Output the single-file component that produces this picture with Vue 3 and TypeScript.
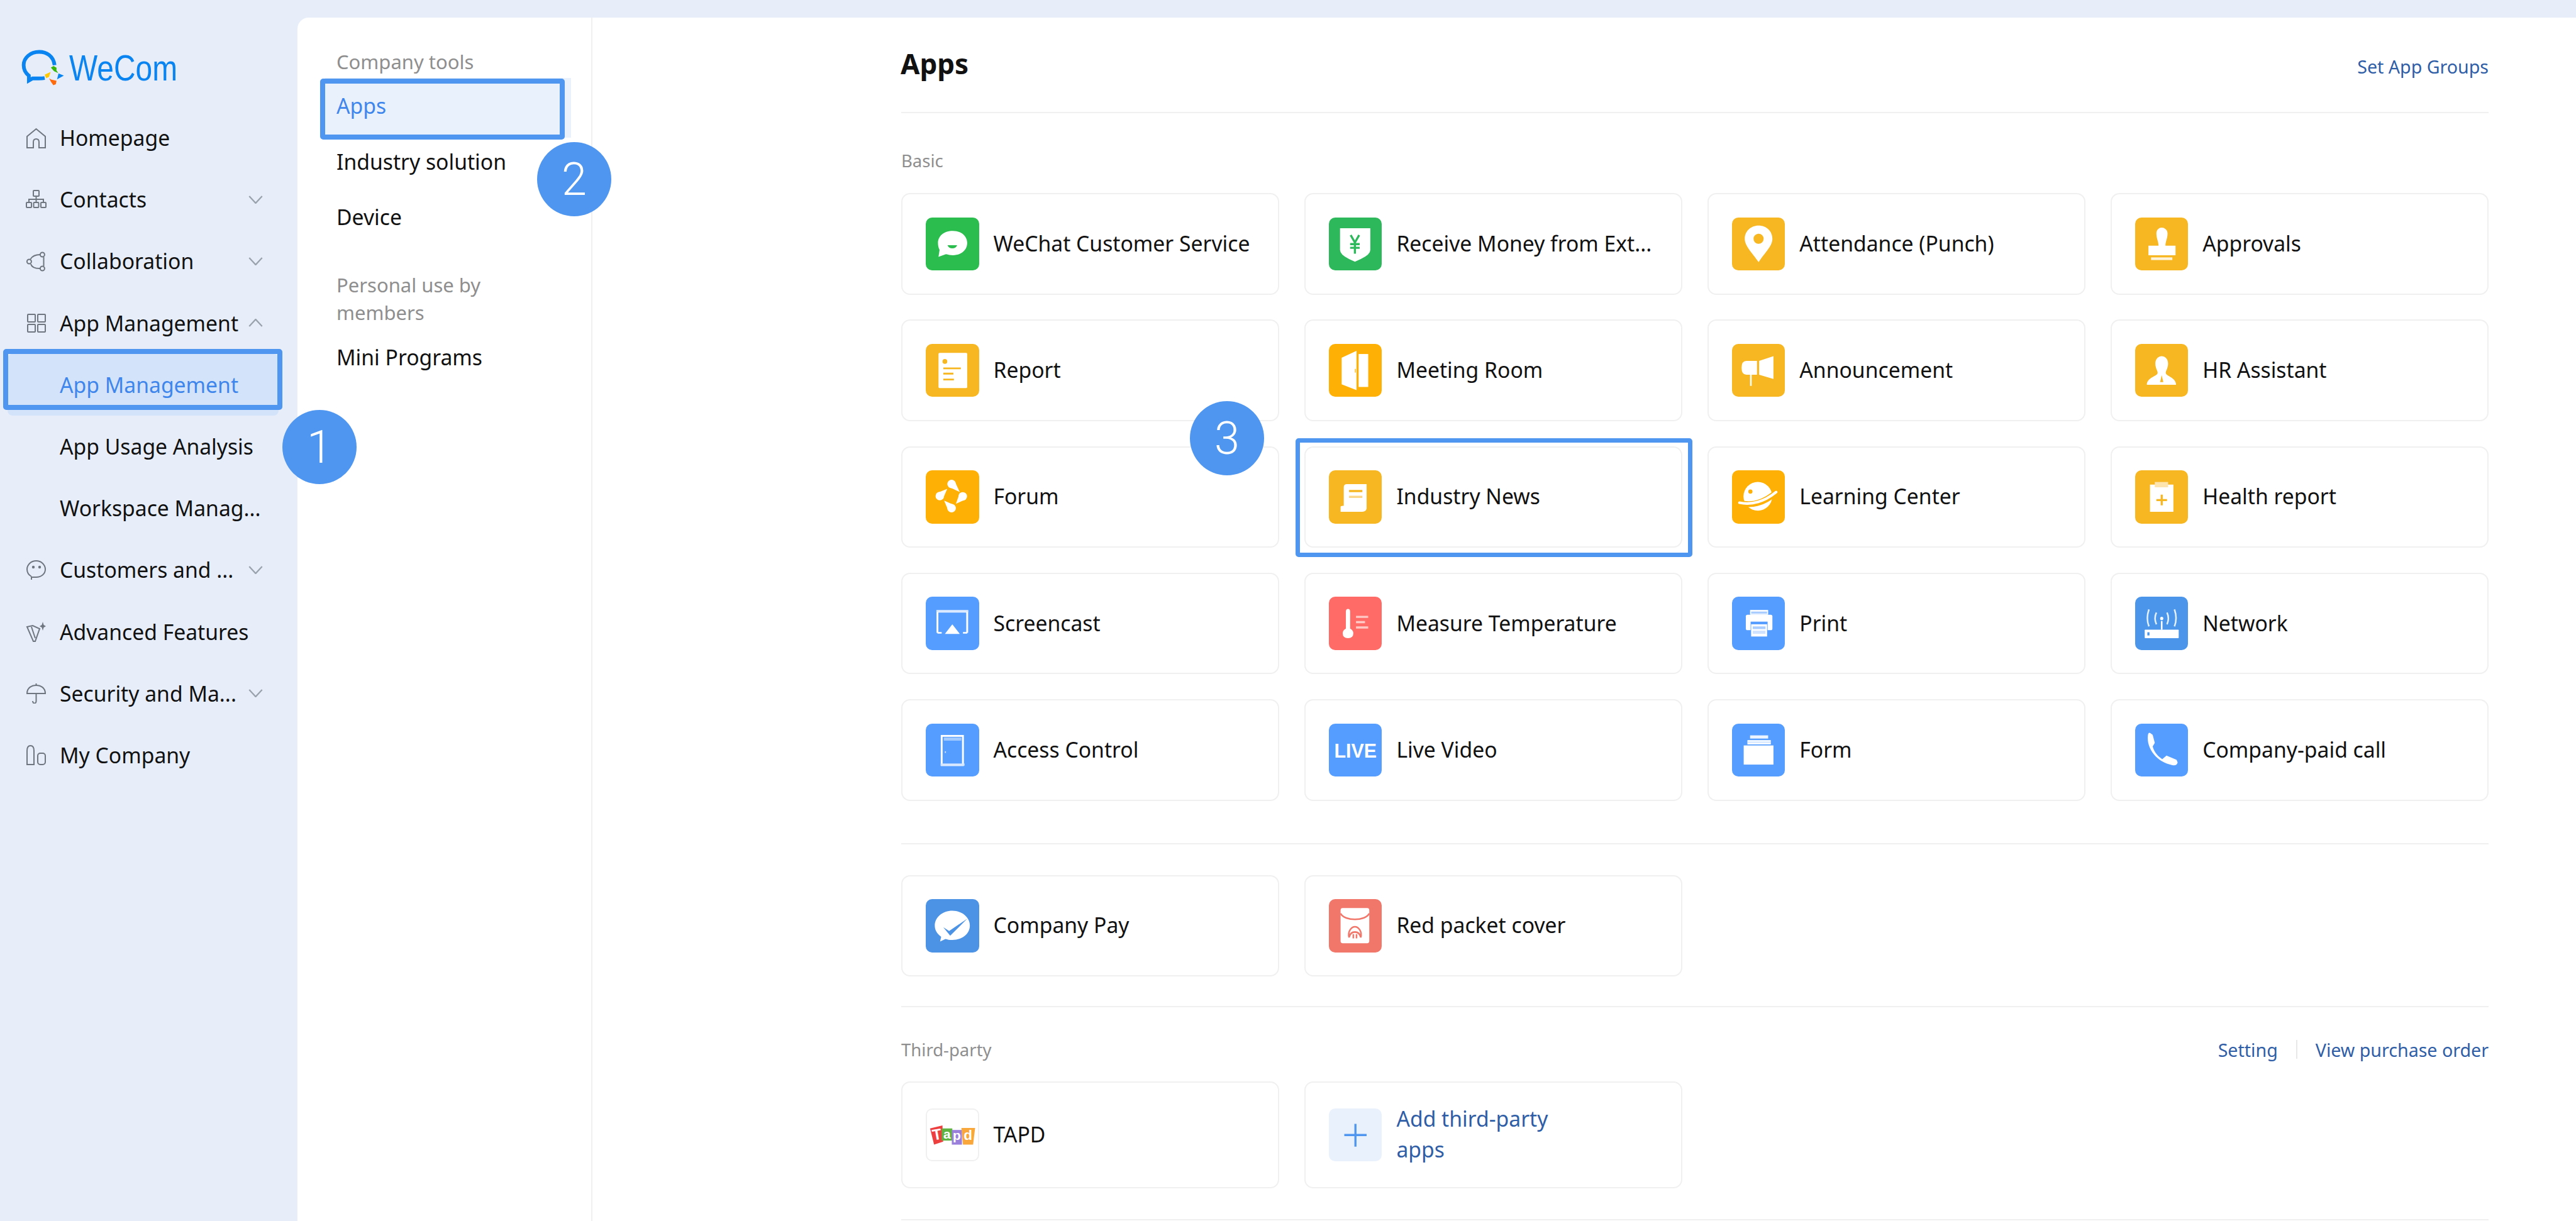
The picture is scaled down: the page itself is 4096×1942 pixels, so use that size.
<script setup lang="ts">
interface NavItem {
  label: string
  icon?: string
  arrow?: "up" | "down"
  active?: boolean
}

interface AppItem {
  name: string
  color: string
  glyph: string
}

const navItems: NavItem[] = [
  { label: "Homepage", icon: `<path d="M2 14 16.5 2 31 14V32H21V23Q21 18 16.5 18T12 23V32H2Z"/>` },
  {
    label: "Contacts",
    arrow: "down",
    icon: `<rect x="12" y="2" width="9" height="9" rx="1"/><path d="M5 21V16H28V21M16.500 11V21"/><rect x="1" y="21" width="8" height="8" rx="1"/><rect x="12.500" y="21" width="8" height="8" rx="1"/><rect x="24" y="21" width="8" height="8" rx="1"/>`,
  },
  {
    label: "Collaboration",
    arrow: "down",
    icon: `<path d="M7.500 13Q12 6 22.500 6M8 21Q10 28 22 28M28.500 10V24"/><circle cx="26.400" cy="6" r="3.500"/><circle cx="5.400" cy="17" r="3.500"/><circle cx="26.400" cy="28" r="3.500"/>`,
  },
  {
    label: "App Management",
    arrow: "up",
    icon: `<rect x="3" y="3" width="12" height="12" rx="1"/><rect x="19" y="3" width="12" height="12" rx="1"/><rect x="3" y="19" width="12" height="12" rx="1"/><rect x="19" y="19" width="12" height="12" rx="1"/>`,
  },
  { label: "App Management", active: true },
  { label: "App Usage Analysis" },
  { label: "Workspace Manag..." },
  {
    label: "Customers and ...",
    arrow: "down",
    icon: `<path d="M9 27C4 24 2 20 2 15.500 2 8 8.500 2 16.500 2S31 8 31 15.500 24.500 28 16.500 28H9V32"/><circle cx="12" cy="12" r="1.200" fill="#6f7680"/><circle cx="22" cy="12" r="1.200" fill="#6f7680"/>`,
  },
  {
    label: "Advanced Features",
    icon: `<path d="M2 9 11 7 22 12 15 32H12Z"/><path d="M9 9 15 27"/><path d="M27 1 28.500 6 32 8 28.500 10 27 15 25.500 10 22 8 25.500 6Z" fill="#6f7680" stroke="none"/>`,
  },
  {
    label: "Security and Ma...",
    arrow: "down",
    icon: `<path d="M2 17C2 8 9 4 16.500 4S31 8 31 17Z"/><path d="M16.500 1V4M16.500 17V29Q16.500 33 13 32.500 11 32 11 29"/>`,
  },
  {
    label: "My Company",
    icon: `<path d="M2 32V10Q2 2 7.500 2T13 10V32Z"/><rect x="19" y="14" width="12" height="18" rx="4"/>`,
  },
]

const amber = "#f6b722"
const gold = "#feb104"
const blue = "#559dfe"

const basicApps: AppItem[] = [
  {
    name: "WeChat Customer Service",
    color: "#2bbd4e",
    glyph: `<path d="M24 74 26 61C24 57 23 53 23 48 23 34 35 25 51 25S78 35 78 48 67 71 51 71C47 71 42 70 38 69Z" fill="#fff"/><path d="M41 52H59Q57 58 50 58T41 52Z" fill="#2bbd4e"/>`,
  },
  {
    name: "Receive Money from Ext...",
    color: "#2eb85c",
    glyph: `<path d="M21 20H78V61Q78 70 60 78L49 83 38 78Q21 70 21 61Z" fill="#fff"/><path d="M41 33 49 47 57 33M40 50H58M40 57H58M49 47V68" fill="none" stroke="#2eb85c" stroke-width="4"/>`,
  },
  {
    name: "Attendance (Punch)",
    color: amber,
    glyph: `<path d="M50 84C38 66 24 54 24 40 24 25 36 15 50 15S76 25 76 40C76 54 62 66 50 84Z" fill="#fff"/><circle cx="50" cy="40" r="9.500" fill="${amber}"/>`,
  },
  {
    name: "Approvals",
    color: amber,
    glyph: `<path d="M40 30C40 23 45 19 50 19S61 23 61 30C61 40 57 45 57 53H76V71H25V53H44C44 45 40 40 40 30Z" fill="#fff"/><rect x="30" y="75" width="40" height="5" fill="#fff" opacity=".85"/>`,
  },
  {
    name: "Report",
    color: amber,
    glyph: `<rect x="24" y="17" width="54" height="66" rx="2" fill="#fff"/><circle cx="36" cy="33" r="4.500" fill="${amber}"/><path d="M33 46H66M33 56H52M33 67H53" stroke="${amber}" stroke-width="3.500"/>`,
  },
  {
    name: "Meeting Room",
    color: gold,
    glyph: `<path d="M24 26 52 13V87L24 76Z" fill="#fff"/><rect x="56" y="19" width="18" height="62" fill="#fff"/><rect x="49" y="47" width="1.500" height="7" fill="${gold}"/>`,
  },
  {
    name: "Announcement",
    color: amber,
    glyph: `<path d="M47 32V58H37V79H34V58H27Q18 58 18 45T27 32ZM51 32 78 23V66L51 58Z" fill="#fff"/>`,
  },
  {
    name: "HR Assistant",
    color: amber,
    glyph: `<path d="M38 37C38 28 44 23 50 23S62 28 62 37C62 47 56 52 58 56 60 61 77 64 77 77H22C22 64 40 61 42 56 44 52 38 47 38 37Z" fill="#fff"/><path d="M50 59 53 72H47Z" fill="${amber}"/>`,
  },
  {
    name: "Forum",
    color: gold,
    glyph: `<g fill="#fff"><circle cx="48.600" cy="25.700" r="8"/><path d="M54.300 20 64 41 43 31Z"/><circle cx="69.600" cy="49" r="8"/><path d="M75.500 54.400 56.800 63 63.700 43.600Z"/><circle cx="48.600" cy="71.300" r="8"/><path d="M54.300 65.700 42.900 76.900 34.600 57Z"/><circle cx="26.400" cy="48.600" r="8"/><path d="M32 54.400 20.800 42.800 40.400 35Z"/></g>`,
  },
  {
    name: "Industry News",
    color: amber,
    glyph: `<path d="M34 26H71V72Q70 78 63 78H22V69Q22 67 26 67H28V32Q28 26 34 26Z" fill="#fff"/><path d="M38 39H63" stroke="${amber}" stroke-width="4"/><path d="M38 50H63" stroke="#fbd78a" stroke-width="4"/>`,
  },
  {
    name: "Learning Center",
    color: gold,
    glyph: `<circle cx="48.600" cy="49" r="27" fill="#fff"/><circle cx="34.600" cy="40" r="4" fill="${gold}"/><path d="M12 61Q50 72 85 40" fill="none" stroke="${gold}" stroke-width="11"/><path d="M14 61Q50 68 83 41" fill="none" stroke="#fff" stroke-width="5" stroke-linecap="round"/>`,
  },
  {
    name: "Health report",
    color: amber,
    glyph: `<path d="M28 27H72V78H28Z" fill="#fff"/><rect x="37" y="22" width="25" height="10" fill="#fde3ad"/><path d="M50 46V66M40 56H60" stroke="${amber}" stroke-width="4"/>`,
  },
  {
    name: "Screencast",
    color: blue,
    glyph: `<path d="M22 68V28H78V68" fill="none" stroke="#fff" stroke-width="3.500"/><rect x="20" y="25" width="60" height="4" fill="#d7e7ff"/><path d="M22 68H30M70 68H78" stroke="#fff" stroke-width="3"/><path d="M50 52 64 70H36Z" fill="#fff"/>`,
  },
  {
    name: "Measure Temperature",
    color: "#ff6b66",
    glyph: `<path d="M32 28Q32 23 36 23T40 28V60Q46 63 46 69 46 78 36 78T26 69Q26 63 32 60Z" fill="#fff"/><path d="M51 38H74M51 48H68M51 58H74" stroke="#ffc9c6" stroke-width="4"/>`,
  },
  {
    name: "Print",
    color: blue,
    glyph: `<rect x="34" y="25" width="34" height="9" fill="#fff"/><rect x="36" y="28" width="30" height="4" fill="#a9cdff"/><rect x="26" y="34" width="50" height="29" rx="3" fill="#fff"/><rect x="35" y="47" width="32" height="17" fill="${blue}"/><rect x="36" y="52" width="30" height="23" fill="#fff"/><rect x="39" y="56" width="24" height="5" fill="#a9cdff"/><rect x="39" y="64" width="24" height="6" fill="#cfe2ff"/>`,
  },
  {
    name: "Network",
    color: "#4b96ea",
    glyph: `<rect x="18" y="62" width="64" height="16" rx="1" fill="#fff"/><rect x="23" y="67" width="4" height="6" fill="#4b96ea"/><path d="M50 46V62" stroke="#fff" stroke-width="3"/><circle cx="50" cy="41" r="3" fill="#fff"/><path d="M40 30Q35 41 40 52M60 30Q65 41 60 52M26 24Q20 41 26 56M74 24Q80 41 74 56" fill="none" stroke="#e5f0ff" stroke-width="3"/>`,
  },
  {
    name: "Access Control",
    color: blue,
    glyph: `<rect x="30" y="23" width="40" height="55" fill="none" stroke="#fff" stroke-width="3.500"/><rect x="34" y="26" width="33" height="6" fill="#d7e7ff" opacity=".6"/><rect x="28" y="75" width="45" height="4" fill="#d7e7ff"/><rect x="36" y="52" width="2" height="3" fill="#d7e7ff"/>`,
  },
  {
    name: "Live Video",
    color: blue,
    glyph: `<text x="50" y="64" text-anchor="middle" font-family="'Liberation Sans', Arial, sans-serif" font-weight="700" font-size="38" textLength="80" lengthAdjust="spacingAndGlyphs" fill="#fff">LIVE</text>`,
  },
  {
    name: "Form",
    color: blue,
    glyph: `<rect x="34" y="22" width="34" height="6" fill="#fff" opacity=".9"/><rect x="29" y="31" width="44" height="8" fill="#fff"/><rect x="29" y="34" width="44" height="1.500" fill="#bcd8ff"/><rect x="22" y="41" width="56" height="36" fill="#fff"/>`,
  },
  {
    name: "Company-paid call",
    color: blue,
    glyph: `<path d="M24 22Q25 15 29 18L33 21 37 36 33 43C36 55 44 62 51 67L59 60 78 68 80 73Q78 80 70 78C42 73 21 48 24 22Z" fill="#fff"/>`,
  },
]

const payApps: AppItem[] = [
  {
    name: "Company Pay",
    color: "#4c93e5",
    glyph: `<path d="M27 80 29 71C21 65 17 58 17 50 17 34 32 22 50 22S83 34 83 50 68 77 50 77C44 77 41 76 37 75Z" fill="#fff"/><path d="M33 53 44 60 78 37 46 69Z" fill="#4c93e5"/>`,
  },
  {
    name: "Red packet cover",
    color: "#f1776b",
    glyph: `<rect x="22" y="17" width="54" height="66" rx="4" fill="#fff"/><path d="M22 27C30 42 68 42 76 27" fill="none" stroke="#f1776b" stroke-width="3"/><path d="M38 72C35 60 43 52 49 52S63 60 60 72C58 64 54 62 49 62S40 64 38 72ZM46 66V74M52 66V74" fill="none" stroke="#f1776b" stroke-width="3"/>`,
  },
]
</script>

<template>
  <div class="page">
    <aside class="sidebar">
      <div class="logo">
        <svg class="logo__mark" viewBox="172 100 345 290" fill="none">
          <path d="M440 225C430 150 375 118 315 118 245 118 190 165 190 225 190 262 205 290 232 310V350L262 332C290 332 330 335 360 330" stroke="#0a84f0" stroke-width="30" />
          <path d="M410 245 432 232 456 246 455 268 470 290 436 274Z" fill="#38b50c" />
          <path d="M360 302 408 280 395 320 372 332Z" fill="#ffc800" />
          <path d="M396 332 412 342 456 352 450 380 430 388 410 360Z" fill="#ff6a0c" />
          <path d="M460 340 472 292 515 310Z" fill="#0a84f0" />
        </svg>
        <span class="logo__text">WeCom</span>
      </div>
      <ul class="nav">
        <li v-for="(item, i) in navItems" :key="i" class="nav__row" :class="{ 'nav__row--active': item.active }">
          <svg v-if="item.icon" class="nav__icon" viewBox="0 0 33 33" v-html="item.icon"></svg>
          <span v-else class="nav__icon"></span>
          <span class="nav__label">{{ item.label }}</span>
          <svg v-if="item.arrow" class="nav__arrow" :class="{ 'nav__arrow--up': item.arrow === 'up' }" viewBox="0 0 24 14">
            <path d="M1 1 12 13 23 1" />
          </svg>
        </li>
      </ul>
    </aside>

    <div class="panel">
      <nav class="subnav">
        <p class="subnav__title subnav__title--first">Company tools</p>
        <a class="subnav__link subnav__link--active">Apps</a>
        <a class="subnav__link">Industry solution</a>
        <a class="subnav__link">Device</a>
        <p class="subnav__title subnav__title--second">Personal use by members</p>
        <a class="subnav__link subnav__link--last">Mini Programs</a>
      </nav>

      <main class="content">
        <header class="head">
          <h1>Apps</h1>
          <a class="link">Set App Groups</a>
        </header>

        <section class="group group--basic">
          <div class="group__label group__label--basic">Basic</div>
          <div class="grid">
            <div v-for="app in basicApps" :key="app.name" class="card">
              <svg class="tile" viewBox="0 0 100 100" :style="{ background: app.color }" v-html="app.glyph"></svg>
              <span class="card__name">{{ app.name }}</span>
            </div>
          </div>
        </section>

        <section class="group group--pay">
          <div class="grid">
            <div v-for="app in payApps" :key="app.name" class="card">
              <svg class="tile" viewBox="0 0 100 100" :style="{ background: app.color }" v-html="app.glyph"></svg>
              <span class="card__name">{{ app.name }}</span>
            </div>
          </div>
        </section>

        <section class="group group--third">
          <div class="group__label group__label--third">
            <span>Third-party</span>
            <div class="third__links">
              <a class="link">Setting</a>
              <i class="third__sep"></i>
              <a class="link">View purchase order</a>
            </div>
          </div>
          <div class="grid grid--third">
            <div class="card">
              <svg class="tile tile--tapd" viewBox="0 0 100 100">
                <g font-family="'Liberation Sans', Arial, sans-serif" font-weight="700" text-anchor="middle" fill="#fff">
                  <path d="M6 37 30.500 31 32 63 14 69Z" fill="#ee3f3f" />
                  <text x="20" y="59" font-size="30" transform="rotate(-10 20 50)">T</text>
                  <rect x="29" y="37" width="21" height="24" fill="#5fb341" />
                  <text x="39.500" y="57" font-size="26">a</text>
                  <rect x="49" y="40" width="20" height="29" fill="#9a7fdb" />
                  <text x="59" y="60" font-size="26">p</text>
                  <path d="M68 36H95L91 69H71Z" fill="#f9a63a" />
                  <text x="81" y="60" font-size="28">d</text>
                </g>
              </svg>
              <span class="card__name">TAPD</span>
            </div>
            <div class="card">
              <svg class="tile tile--add" viewBox="0 0 100 100">
                <path d="M50 29V72M29 50H71" stroke="#4f96f0" stroke-width="4" />
              </svg>
              <span class="card__name card__name--add">Add third-party apps</span>
            </div>
          </div>
        </section>
      </main>
    </div>

    <!-- tutorial marks painted over the screenshot -->
    <div class="mark mark--nav"></div>
    <div class="mark mark--sub"></div>
    <div class="mark mark--card"></div>
    <div class="badge badge--1">1</div>
    <div class="badge badge--2">2</div>
    <div class="badge badge--3">3</div>
  </div>
</template>

<style scoped>
.page {
  position: relative;
  display: flex;
  width: 4096px;
  height: 1942px;
  overflow: hidden;
  background: #e7eefa;
  font-family: "Noto Sans", "Liberation Sans", Arial, sans-serif;
  font-size: 33.700px;
  color: #111;
}

.sidebar {
  flex: 0 0 473px;
}

.logo {
  display: flex;
  align-items: center;
  height: 57px;
  margin: 79px 0 0 34px;
}

.logo__mark {
  width: 68px;
  height: 57px;
}

.logo__text {
  margin-left: 8px;
  font-family: "Liberation Sans", Arial, sans-serif;
  font-size: 57px;
  color: #0a84f0;
  transform: scaleX(0.84);
  transform-origin: left center;
}

.nav {
  list-style: none;
  margin: 34px 0 0;
  padding: 0;
}

.nav__row {
  display: flex;
  align-items: center;
  height: 98.2px;
  padding-left: 41px;
  margin: 0 30px 0 0;
  position: relative;
}

.nav__row--active {
  color: #3f86ec;
  background: #d3e3fa;
  margin: 0 30px 0 12px;
  padding-left: 29px;
  border-radius: 8px;
}

.nav__icon {
  flex: 0 0 33px;
  width: 33px;
  height: 33px;
  margin-right: 21px;
  fill: none;
  stroke: #6f7680;
  stroke-width: 2;
}

.nav__label {
  white-space: nowrap;
}

.nav__arrow {
  position: absolute;
  left: 395px;
  width: 23px;
  height: 13px;
  fill: none;
  stroke: #9aa3ad;
  stroke-width: 2.500;
}

.nav__arrow--up {
  transform: rotate(180deg);
}

.panel {
  flex: 1;
  display: flex;
  margin-top: 28px;
  background: #fff;
  border-top-left-radius: 18px;
}

.subnav {
  flex: 0 0 469px;
  display: flex;
  flex-direction: column;
  padding-left: 62px;
  border-right: 2px solid #f0f0f0;
  box-sizing: border-box;
}

.subnav__title {
  margin: 0;
  font-size: 31px;
  line-height: 44px;
  color: #8e8e8e;
  width: 290px;
}

.subnav__title--first {
  margin-top: 48px;
}

.subnav__title--second {
  margin-top: 41px;
}

.subnav__link {
  display: flex;
  align-items: center;
  height: 88.500px;
}

.subnav__link--active {
  color: #3f86ec;
  margin: 4px 0 0 -18px;
  padding-left: 18px;
  width: 373px;
  background: #e9f1fd;
  box-shadow: 0 6px 0 #e9f1fd;
}

.subnav__link--last {
  margin-top: 5px;
}

.content {
  flex: 1;
  padding: 0 139px 0 491px;
  box-sizing: border-box;
  min-width: 0;
}

.head {
  display: flex;
  justify-content: space-between;
  align-items: center;
  height: 150px;
  border-bottom: 2px solid #f0f0f0;
}

.head h1 {
  margin: 0 0 4px -1px;
  font-size: 44px;
  font-weight: 700;
  color: #111;
}

.head .link {
  padding-top: 4px;
}

.link {
  font-size: 28.600px;
  color: #2f5ea6;
}

.group {
  border-bottom: 2px solid #f0f0f0;
}

.group--basic {
  padding-bottom: 67px;
}

.group--pay {
  padding: 49px 0 47px;
}

.group--third {
  padding-bottom: 49px;
}

.group__label {
  font-size: 27.500px;
  color: #8e8e8e;
  display: flex;
  align-items: center;
  justify-content: space-between;
}

.group__label--basic {
  height: 103px;
  padding-top: 24px;
}

.group__label--third {
  height: 102px;
  padding-top: 16px;
}

.third__links {
  display: flex;
  align-items: center;
}

.third__sep {
  width: 2px;
  height: 30px;
  margin: 0 29px;
  background: #e8e8e8;
}

.grid {
  display: grid;
  grid-template-columns: repeat(4, 1fr);
  grid-auto-rows: 161.500px;
  column-gap: 39.600px;
  row-gap: 39.750px;
}

.grid--third {
  grid-auto-rows: 170px;
}

.card {
  display: flex;
  align-items: center;
  padding-left: 37px;
  background: #fff;
  border: 2px solid #f0f0f0;
  border-radius: 14px;
  box-sizing: border-box;
}

.tile {
  flex: 0 0 84.500px;
  width: 84.500px;
  height: 84.500px;
  margin-right: 23px;
  border-radius: 10px;
}

.tile--tapd {
  background: #fff;
  border: 2px solid #f0f0f0;
  box-sizing: border-box;
}

.tile--add {
  background: #e9f1fd;
}

.card__name {
  white-space: nowrap;
  padding-bottom: 2px;
}

.card__name--add {
  width: 300px;
  white-space: normal;
  line-height: 49px;
  color: #2f5ea6;
}

.mark {
  position: absolute;
  box-sizing: border-box;
  border: 8px solid #4f96f0;
  border-radius: 5px;
}

.mark--nav {
  left: 5px;
  top: 555px;
  width: 444px;
  height: 97px;
}

.mark--sub {
  left: 509px;
  top: 125px;
  width: 389px;
  height: 97px;
}

.mark--card {
  left: 2060px;
  top: 697px;
  width: 631px;
  height: 189px;
  border-width: 7px;
}

.badge {
  position: absolute;
  display: flex;
  align-items: center;
  justify-content: center;
  width: 118px;
  height: 118px;
  border-radius: 50%;
  background: #4f96f0;
  color: #fff;
  font-family: Roboto, "Liberation Sans", sans-serif;
  font-weight: 300;
  font-size: 72px;
}

.badge--1 {
  left: 449px;
  top: 652px;
}

.badge--2 {
  left: 854px;
  top: 226px;
}

.badge--3 {
  left: 1892px;
  top: 638px;
}
</style>

<style>
html,
body {
  margin: 0;
  background: #e7eefa;
}
</style>
